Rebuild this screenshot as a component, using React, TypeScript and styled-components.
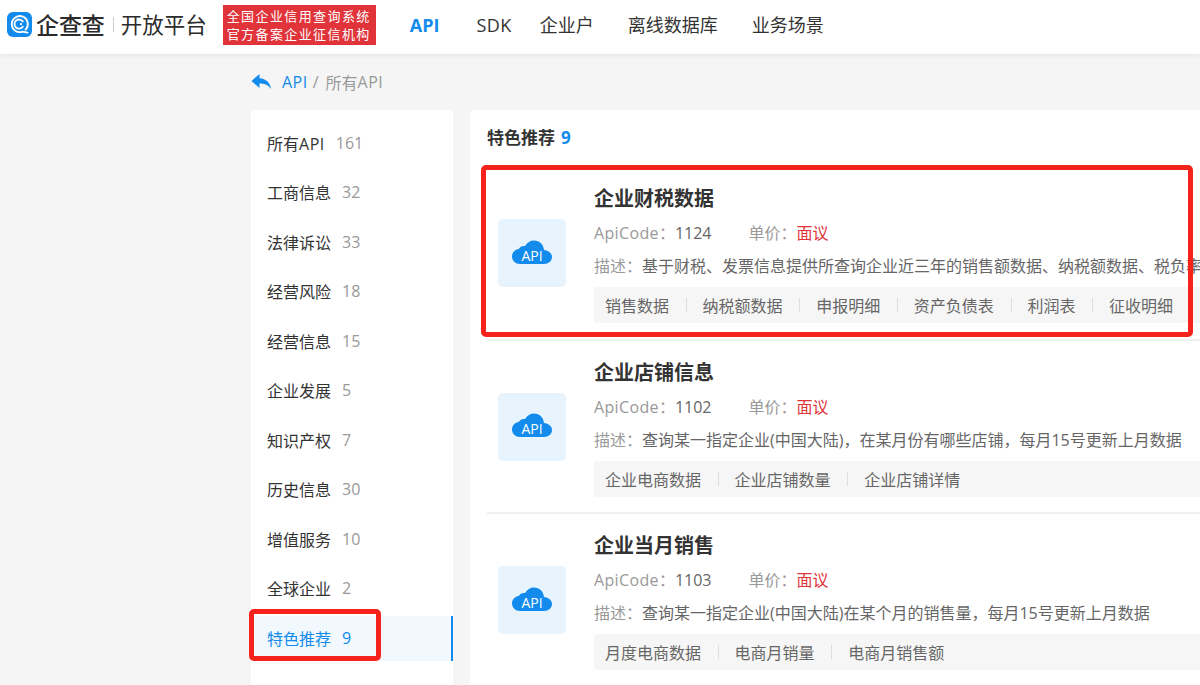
import React from "react";
import styled, { createGlobalStyle } from "styled-components";

const Global = createGlobalStyle`
  html, body { margin: 0; padding: 0; height: 685px; overflow: hidden; background: #f5f5f5; }
  body { font-family: "Open Sans", "Noto Sans CJK SC", sans-serif; color: #333; }
  * { box-sizing: border-box; }
`;

const Page = styled.div`
  position: relative;
  width: 1200px;
  height: 685px;
  overflow: hidden;
`;
const Header = styled.header`
  height: 54px;
  background: #fff;
  box-shadow: 0 1px 4px rgba(0, 0, 0, 0.08);
  display: flex;
  align-items: center;
  padding: 0 0 5px 7px;
`;
const LogoMark = styled.svg`
  width: 25px;
  height: 25px;
  flex: none;
`;
const Brand = styled.span`
  margin-left: 4px;
  font-size: 23px;
  line-height: 30px;
  font-weight: 500;
  color: #2b2b2b;
  letter-spacing: -0.1px;
`;
const BrandDivider = styled.i`
  width: 1px;
  height: 15px;
  margin: 0 7px 0 8px;
  background: #ccc;
`;
const Platform = styled.span`
  font-size: 21.5px;
  line-height: 30px;
  color: #2b2b2b;
`;
const Credential = styled.div`
  margin-left: 16px;
  width: 153px;
  height: 40px;
  background: #e0343a;
  color: #fff;
  font-size: 13px;
  line-height: 18px;
  letter-spacing: 1.4px;
  padding: 2px 0 0 4px;
  white-space: nowrap;
`;
const Nav = styled.nav`
  display: flex;
  margin-left: 34px;
`;
const NavItem = styled.a<{ $active?: boolean; $gap?: number }>`
  margin-left: ${(p) => p.$gap ?? 0}px;
  font-size: 18px;
  line-height: 26px;
  font-weight: ${(p) => (p.$active ? 700 : 400)};
  color: ${(p) => (p.$active ? "#128bed" : "#333")};
`;
const WideLatin = styled.span`
  letter-spacing: 0.5px;
`;
const CodeLatin = styled.span`
  letter-spacing: 0.35px;
`;
const Crumbs = styled.div`
  height: 56px;
  margin-left: 251px;
  display: flex;
  align-items: center;
  font-size: 16px;
  color: #999;
`;
const BackIcon = styled.svg`
  width: 21px;
  height: 18px;
  margin-right: 10px;
`;
const CrumbLink = styled.a`
  color: #128bed;
`;
const CrumbSep = styled.span`
  margin: 0 7px 0 5px;
`;
const Body = styled.div`
  display: flex;
  padding-left: 251px;
  gap: 17px;
`;
const Sidebar = styled.aside`
  width: 202px;
  height: 575px;
  background: #fff;
  border-radius: 4px 4px 0 0;
  padding-top: 10.5px;
  display: flex;
  flex-direction: column;
  gap: 4.5px;
`;
const SideItem = styled.a<{ $active?: boolean }>`
  height: 45px;
  flex: none;
  padding: 0 0 1px 16px;
  display: flex;
  align-items: center;
  font-size: 16px;
  color: ${(p) => (p.$active ? "#128bed" : "#333")};
  background: ${(p) => (p.$active ? "#f1f8fe" : "transparent")};
  border-right: 2px solid ${(p) => (p.$active ? "#128bed" : "transparent")};
`;
const SideCount = styled.span<{ $active?: boolean }>`
  margin-left: 11px;
  color: ${(p) => (p.$active ? "#128bed" : "#999")};
`;
const Main = styled.main`
  width: 730px;
  height: 575px;
  background: #fff;
  border-radius: 4px 0 0 0;
  padding: 16px 0 0 17px;
  overflow: hidden;
`;
const SectionTitle = styled.h2`
  margin: 0;
  font-size: 17px;
  line-height: 24px;
  font-weight: 700;
  color: #333;
`;
const SectionCount = styled.span`
  margin-left: 1.5px;
  color: #128bed;
`;
const List = styled.div`
  margin-top: 17px;
  display: flex;
  flex-direction: column;
`;
const Item = styled.article`
  height: 173.5px;
  flex: none;
  border-bottom: 2px solid #f0f0f0;
  display: flex;
  align-items: flex-start;
  padding: 0 0 0 11px;
  &:last-child { border-bottom: 0; }
`;
const ApiTile = styled.div`
  width: 68px;
  height: 68px;
  margin-top: 52px;
  padding-bottom: 3px;
  flex: none;
  background: #e7f3fd;
  border-radius: 5px;
  display: flex;
  align-items: center;
  justify-content: center;
`;
const CloudIcon = styled.svg`
  width: 40px;
  height: 24px;
`;
const Info = styled.div`
  margin-left: 28px;
  padding-top: 17px;
  width: 606px;
  min-width: 0;
`;
const Title = styled.h3`
  margin: 0;
  font-size: 20px;
  line-height: 30px;
  font-weight: 700;
  color: #333;
`;
const Meta = styled.div`
  margin-top: 7px;
  display: flex;
  font-size: 16px;
  line-height: 24px;
  color: #666;
`;
const MetaLabel = styled.span`
  color: #999;
`;
const Price = styled.span`
  margin-left: 37px;
`;
const Red = styled.span`
  color: #e0343a;
`;
const Desc = styled.div`
  margin-top: 9px;
  font-size: 16px;
  line-height: 24px;
  color: #666;
  white-space: nowrap;
`;
const Tags = styled.div`
  margin-top: 9px;
  height: 36px;
  padding: 0 11px;
  background: #f6f6f6;
  display: flex;
  align-items: center;
  font-size: 16px;
  color: #666;
  border-radius: 2px 0 0 2px;
`;
const Tag = styled.span`
  & + & {
    margin-left: 16.8px;
    padding-left: 16.8px;
    background: linear-gradient(#ddd, #ddd) left center / 1px 14px no-repeat;
  }
`;
const Mark = styled.div`
  position: absolute;
  border: 5px solid #f5231c;
  border-radius: 5px;
  pointer-events: none;
`;
const MarkCard = styled(Mark)`
  left: 481px;
  top: 165px;
  width: 712px;
  height: 172px;
`;
const MarkSide = styled(Mark)`
  left: 249px;
  top: 609px;
  width: 132px;
  height: 52px;
`;

const sideData: [string, number][] = [
  ["所有API", 161], ["工商信息", 32], ["法律诉讼", 33], ["经营风险", 18], ["经营信息", 15],
  ["企业发展", 5], ["知识产权", 7], ["历史信息", 30], ["增值服务", 10], ["全球企业", 2], ["特色推荐", 9],
];

const items = [
  {
    title: "企业财税数据", code: 1124,
    desc: "基于财税、发票信息提供所查询企业近三年的销售额数据、纳税额数据、税负率等数据",
    tags: ["销售数据", "纳税额数据", "申报明细", "资产负债表", "利润表", "征收明细"],
  },
  {
    title: "企业店铺信息", code: 1102,
    desc: "查询某一指定企业(中国大陆)，在某月份有哪些店铺，每月15号更新上月数据",
    tags: ["企业电商数据", "企业店铺数量", "企业店铺详情"],
  },
  {
    title: "企业当月销售", code: 1103,
    desc: "查询某一指定企业(中国大陆)在某个月的销售量，每月15号更新上月数据",
    tags: ["月度电商数据", "电商月销量", "电商月销售额"],
  },
];

const Logo = () => (
  <LogoMark viewBox="0 0 25 25">
    <rect width="25" height="25" rx="6" fill="#128bed" />
    <path d="M18.6 17.6A8 8 0 1 0 15.6 19.6L20.5 20.6" fill="none" stroke="#fff" strokeWidth="1.9" strokeLinecap="round" strokeLinejoin="round" />
    <path d="M15.8 9.4a4.6 4.6 0 1 0 0 5.4" fill="none" stroke="#fff" strokeWidth="1.8" strokeLinecap="round" />
    <circle cx="14" cy="12.2" r="1.1" fill="#fff" />
  </LogoMark>
);

const Cloud = () => (
  <CloudIcon viewBox="0 0 40 24">
    <path
      d="M8 24C3.5 24 0 20.8 0 16.5C0 12.5 3 9.5 6.8 9C8 6.5 10.5 5.5 13 6C15 2.5 18.5 0.5 22 0.5C27.5 0.5 31.5 4.5 32 10C36.5 10.5 40 13 40 17C40 21 36.5 24 32 24Z"
      fill="#128bed"
    />
    <text x="20" y="20.5" textAnchor="middle" fontSize="14" fill="#fff" fontFamily="Open Sans, sans-serif">API</text>
  </CloudIcon>
);

export default function App() {
  return (
    <Page>
      <Global />
      <Header>
        <Logo />
        <Brand>企查查</Brand>
        <BrandDivider />
        <Platform>开放平台</Platform>
        <Credential>
          全国企业信用查询系统
          <br />
          官方备案企业征信机构
        </Credential>
        <Nav>
          <NavItem $active>API</NavItem>
          <NavItem $gap={37}>
            <WideLatin>SDK</WideLatin>
          </NavItem>
          <NavItem $gap={28}>企业户</NavItem>
          <NavItem $gap={34}>离线数据库</NavItem>
          <NavItem $gap={34}>业务场景</NavItem>
        </Nav>
      </Header>
      <Crumbs>
        <BackIcon viewBox="0 0 21 18">
          <path d="M8.5 1L0.5 8L8.5 15V10.6C13 10.6 17 11.5 20 16C19.3 9.5 15 5.6 8.5 5.2Z" fill="#128bed" />
        </BackIcon>
        <CrumbLink>
          <WideLatin>API</WideLatin>
        </CrumbLink>
        <CrumbSep>/</CrumbSep>
        所有<WideLatin>API</WideLatin>
      </Crumbs>
      <Body>
        <Sidebar>
          {sideData.map(([name, n], i) => {
            const active = i === sideData.length - 1;
            const hasApi = name.endsWith("API");
            return (
              <SideItem key={name} $active={active}>
                <span>
                  {hasApi ? name.slice(0, -3) : name}
                  {hasApi && <WideLatin>API</WideLatin>}
                </span>
                <SideCount $active={active}>{n}</SideCount>
              </SideItem>
            );
          })}
        </Sidebar>
        <Main>
          <SectionTitle>
            特色推荐 <SectionCount>9</SectionCount>
          </SectionTitle>
          <List>
            {items.map((it) => (
              <Item key={it.code}>
                <ApiTile>
                  <Cloud />
                </ApiTile>
                <Info>
                  <Title>{it.title}</Title>
                  <Meta>
                    <span>
                      <MetaLabel>
                        <CodeLatin>ApiCode</CodeLatin>：
                      </MetaLabel>
                      {it.code}
                    </span>
                    <Price>
                      <MetaLabel>单价：</MetaLabel>
                      <Red>面议</Red>
                    </Price>
                  </Meta>
                  <Desc>
                    <MetaLabel>描述：</MetaLabel>
                    {it.desc}
                  </Desc>
                  <Tags>
                    {it.tags.map((t) => (
                      <Tag key={t}>{t}</Tag>
                    ))}
                  </Tags>
                </Info>
              </Item>
            ))}
          </List>
        </Main>
      </Body>
      <MarkCard />
      <MarkSide />
    </Page>
  );
}
